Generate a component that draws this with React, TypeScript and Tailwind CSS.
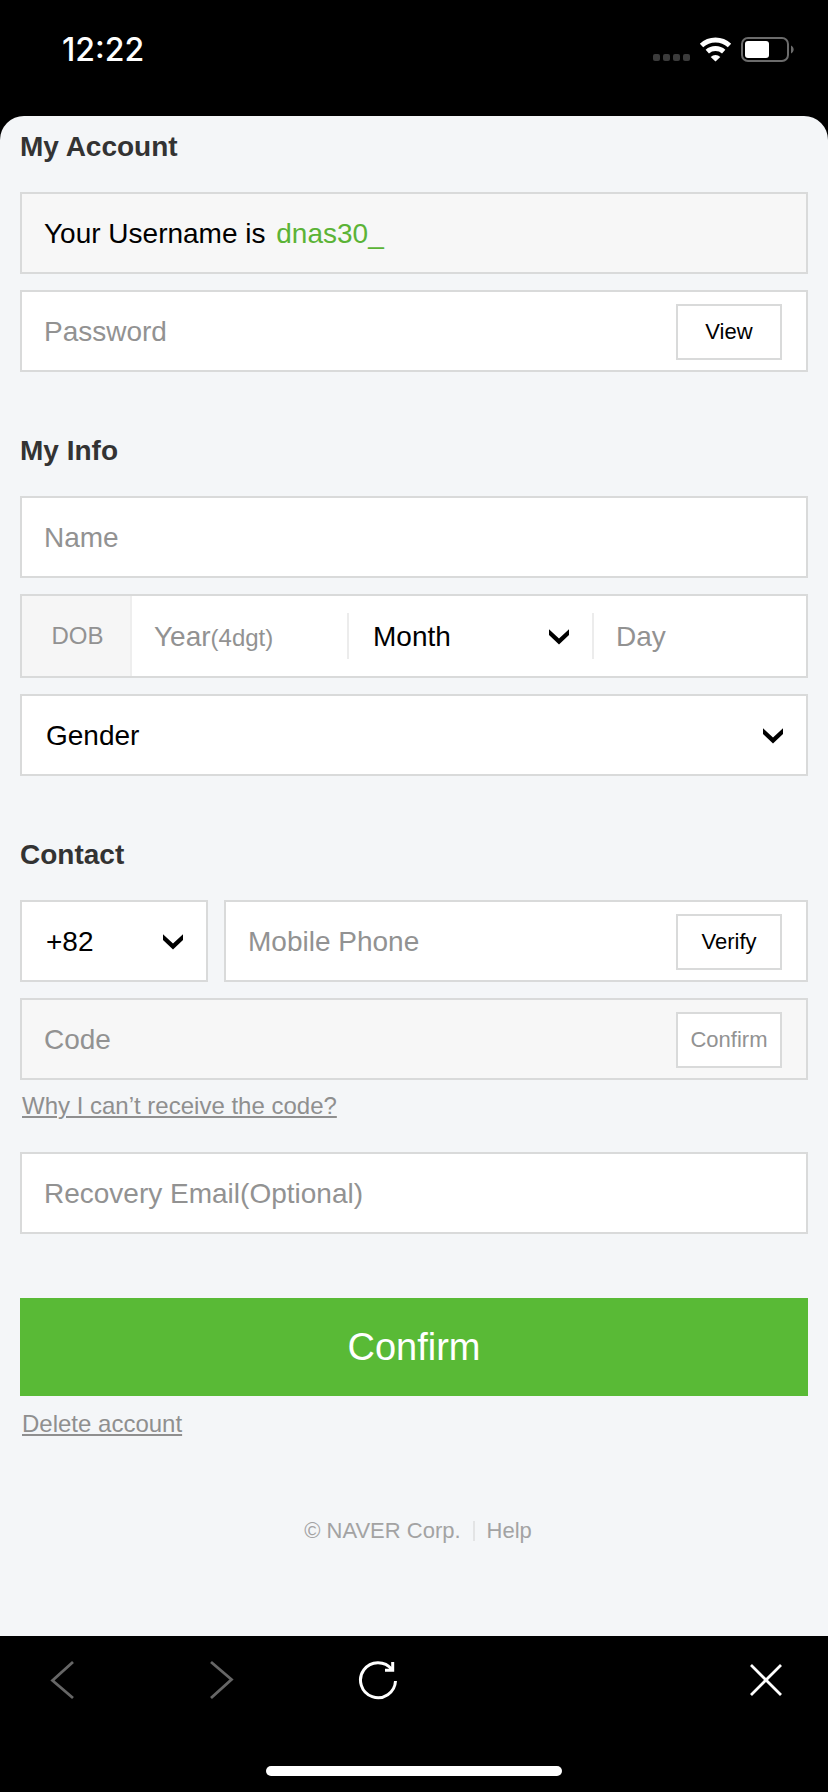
import { FC, ReactNode } from "react";

type FieldProps = {
  children: ReactNode;
  muted?: boolean;
};

type SelectProps = {
  id: string;
  label: string;
  options: string[];
};

const MONTHS = ["Month", "1", "2", "3", "4", "5", "6", "7", "8", "9", "10", "11", "12"];
const GENDERS = ["Gender", "Male", "Female"];
const COUNTRY_CODES = ["+82", "+81", "+1"];

const inputClass =
  "h-full w-full min-w-0 flex-1 bg-transparent pl-[22px] text-[28px] leading-8 text-black outline-none placeholder:text-[#929292] placeholder:opacity-100";

const smallButtonClass =
  "mr-6 h-14 w-[106px] shrink-0 border-2 border-[#d9dada] bg-white text-[22px] leading-[26px] text-black disabled:text-[#929292]";

const linkClass =
  "text-2xl leading-7 text-[#8f8f8f] underline decoration-2 underline-offset-2";

const Field: FC<FieldProps> = ({ children, muted }) => (
  <div
    className={
      muted
        ? "flex h-[82px] items-center border-2 border-[#d9dada] bg-[#f7f7f7] pt-[2px]"
        : "flex h-[82px] items-center border-2 border-[#d9dada] bg-white pt-[2px]"
    }
  >
    {children}
  </div>
);

const Heading: FC<{ children: ReactNode }> = ({ children }) => (
  <h2 className="mb-[29px] text-[28px] leading-8 font-bold text-[#333]">{children}</h2>
);

const Select: FC<SelectProps> = ({ id, label, options }) => (
  <div className="relative flex h-full w-full items-center">
    <select
      id={id}
      aria-label={label}
      className="h-full w-full appearance-none bg-transparent pl-6 text-[28px] leading-8 text-black outline-none"
    >
      {options.map((option) => (
        <option key={option}>{option}</option>
      ))}
    </select>
    <svg
      className="pointer-events-none absolute right-[23px] h-4 w-5"
      viewBox="0 0 20 16"
      fill="#000"
      aria-hidden="true"
    >
      <path d="M0 0.300 10 9.500 20 0.300V6L10 15.500 0 6Z" />
    </svg>
  </div>
);

const StatusBar: FC = () => (
  <header className="flex h-[116px] items-start justify-between pt-[30px] pr-[34px] pl-[62px] text-white">
    <time className="font-['Inter',sans-serif] text-[32px] leading-10 font-medium">12:22</time>
    <svg className="mt-[6px] h-7 w-[142px]" viewBox="0 0 142 28" aria-hidden="true">
      <g fill="#3b3b3b">
        <rect x="1" y="18" width="7" height="7" rx="2" />
        <rect x="11" y="18" width="7" height="7" rx="2" />
        <rect x="21" y="18" width="7" height="7" rx="2" />
        <rect x="31" y="18" width="7" height="7" rx="2" />
      </g>
      <g fill="none" stroke="#fff" strokeWidth="5">
        <path d="M49.500 9.500a20.500 20.500 0 0 1 28 0" />
        <path d="M55.300 15.600a12.300 12.300 0 0 1 16.400 0" />
      </g>
      <path d="M63.500 25.500l-4.800-4.600a7 7 0 0 1 9.600 0z" fill="#fff" />
      <rect x="90" y="2" width="46" height="23" rx="6" fill="none" stroke="#6b6b6b" strokeWidth="2" />
      <rect x="93" y="5" width="24" height="17" rx="3" fill="#fff" />
      <path d="M139 9.500c3.500 1.500 3.500 6.500 0 8z" fill="#6b6b6b" />
    </svg>
  </header>
);

const BottomBar: FC = () => (
  <nav className="flex flex-col bg-black pt-6 pb-4">
    <div className="flex items-center gap-[118px] pr-[42px] pl-[42px]">
      <button type="button" aria-label="Back" disabled>
        <svg className="size-10" viewBox="0 0 40 40" fill="none" stroke="#666" strokeWidth="2.800">
          <path d="M31 2 10.500 20.500 31 38" />
        </svg>
      </button>
      <button type="button" aria-label="Forward" disabled>
        <svg className="size-10" viewBox="0 0 40 40" fill="none" stroke="#666" strokeWidth="2.800">
          <path d="M11 2 31.500 19.500 11 38" />
        </svg>
      </button>
      <button type="button" aria-label="Reload">
        <svg className="size-10" viewBox="0 0 40 40" fill="none" stroke="#fff" strokeWidth="3">
          <path d="M37.500 21a17.500 17.500 0 1 1-3.600-11.500" />
          <path d="M34.700 2V10.300H27" />
        </svg>
      </button>
      <button type="button" aria-label="Close" className="ml-auto">
        <svg className="size-10" viewBox="0 0 40 40" fill="none" stroke="#fff" strokeWidth="2.800">
          <path d="M5 5 35 35M35 5 5 35" />
        </svg>
      </button>
    </div>
    <div className="mx-auto mt-[66px] h-[10px] w-[296px] rounded-full bg-white" />
  </nav>
);

export default function App() {
  return (
    <div className="flex min-h-screen flex-col bg-black font-['Liberation_Sans',Arial,sans-serif]">
      <StatusBar />
      <main className="flex-1 rounded-t-3xl bg-[#f4f6f8] px-5 pt-[15px] pb-[92px]">
        <form>
          <section className="mb-[63px]">
            <Heading>My Account</Heading>
            <div className="flex flex-col gap-4">
              <Field muted>
                <p className="pl-[22px] text-[28px] leading-8 text-black">
                  Your Username is <span className="ml-[3px] text-[#5bb336]">dnas30_</span>
                </p>
              </Field>
              <Field>
                <input className={inputClass} type="password" aria-label="Password" placeholder="Password" />
                <button type="button" className={smallButtonClass}>
                  View
                </button>
              </Field>
            </div>
          </section>

          <section className="mb-[63px]">
            <Heading>My Info</Heading>
            <div className="flex flex-col gap-4">
              <Field>
                <input className={inputClass} type="text" aria-label="Name" placeholder="Name" />
              </Field>
              <div className="flex h-[84px] items-center border-2 border-[#d9dada] bg-white">
                <label
                  htmlFor="year"
                  className="flex h-full w-[110px] shrink-0 items-center justify-center border-r-2 border-[#eee] bg-[#f6f6f6] pl-[3px] text-2xl leading-7 text-[#929292]"
                >
                  DOB
                </label>
                <div className="relative flex h-full flex-[215] items-center pt-[2px]">
                  <input id="year" className={`peer ${inputClass}`} type="text" inputMode="numeric" placeholder=" " />
                  <span className="pointer-events-none absolute left-[22px] hidden text-[28px] leading-8 text-[#929292] peer-placeholder-shown:inline">
                    Year<span className="text-2xl leading-7">(4dgt)</span>
                  </span>
                </div>
                <div className="h-[46px] w-[2px] shrink-0 bg-[#ececec]" />
                <div className="h-full flex-[243] pt-[2px]">
                  <Select id="month" label="Month" options={MONTHS} />
                </div>
                <div className="h-[46px] w-[2px] shrink-0 bg-[#ececec]" />
                <div className="h-full flex-[212] pt-[2px]">
                  <input className={inputClass} type="text" inputMode="numeric" aria-label="Day" placeholder="Day" />
                </div>
              </div>
              <Field>
                <Select id="gender" label="Gender" options={GENDERS} />
              </Field>
            </div>
          </section>

          <section className="mb-16">
            <Heading>Contact</Heading>
            <div className="flex flex-col gap-4">
              <div className="flex gap-4">
                <div className="w-[188px] shrink-0">
                  <Field>
                    <Select id="country" label="Country code" options={COUNTRY_CODES} />
                  </Field>
                </div>
                <div className="min-w-0 flex-1">
                  <Field>
                    <input className={inputClass} type="tel" aria-label="Mobile Phone" placeholder="Mobile Phone" />
                    <button type="button" className={smallButtonClass}>
                      Verify
                    </button>
                  </Field>
                </div>
              </div>
              <Field muted>
                <input className={inputClass} type="text" aria-label="Code" placeholder="Code" disabled />
                <button type="button" className={smallButtonClass} disabled>
                  Confirm
                </button>
              </Field>
            </div>
            <div className="mt-3 mb-8 flex pl-[2px]">
              <a href="#code-help" className={linkClass}>
                Why I can’t receive the code?
              </a>
            </div>
            <Field>
              <input
                className={inputClass}
                type="email"
                aria-label="Recovery Email(Optional)"
                placeholder="Recovery Email(Optional)"
              />
            </Field>
          </section>

          <button type="submit" className="h-[98px] w-full bg-[#59ba36] text-[38px] leading-[44px] text-white">
            Confirm
          </button>
          <div className="mt-[14px] flex pl-[2px]">
            <a href="#delete" className={linkClass}>
              Delete account
            </a>
          </div>
        </form>

        <footer className="mt-20 flex items-center justify-center gap-3 pl-2 text-[22px] leading-[26px] text-[#a3a3a3]">
          <span>© NAVER Corp.</span>
          <span className="h-5 w-[2px] bg-[#e3e4e5]" />
          <a href="#help">Help</a>
        </footer>
      </main>
      <BottomBar />
    </div>
  );
}
